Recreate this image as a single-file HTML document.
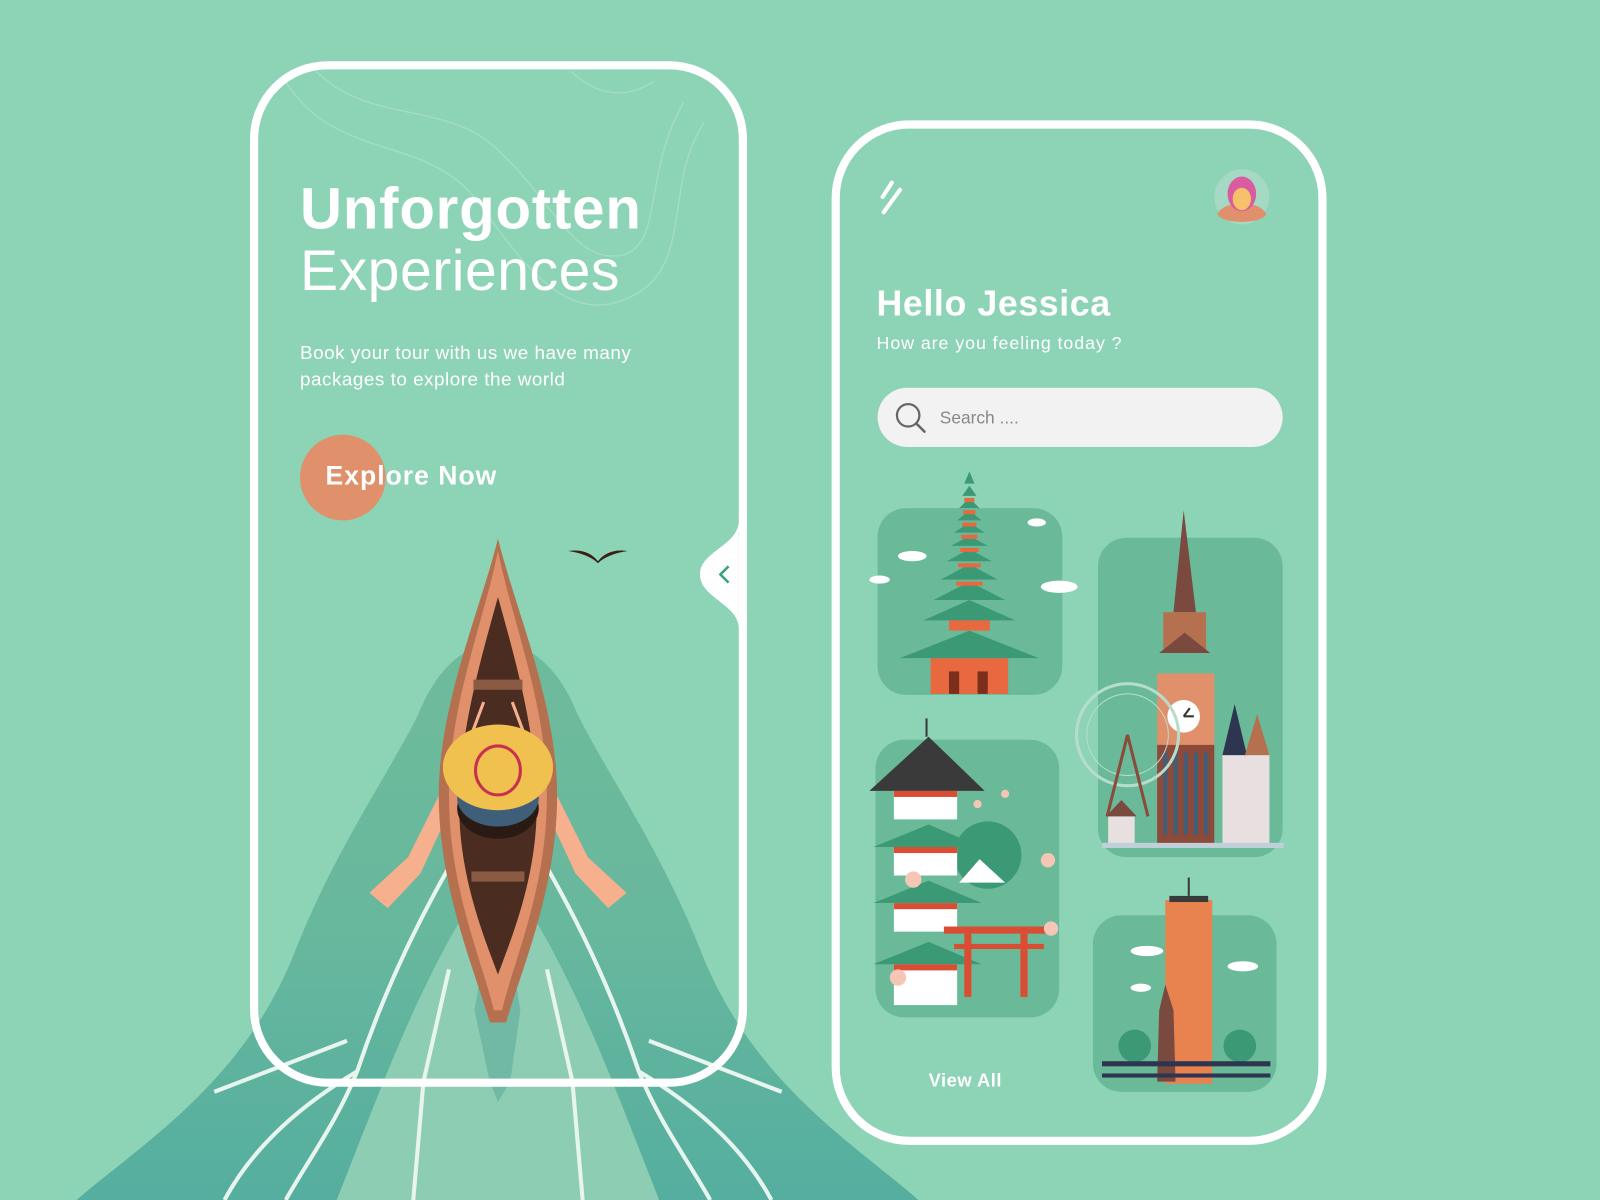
<!DOCTYPE html>
<html><head><meta charset="utf-8"><style>
html,body{margin:0;padding:0;background:#8dd3b6;width:1600px;height:1200px;overflow:hidden}
svg{display:block}
text{font-family:"Liberation Sans",sans-serif}
</style></head><body>
<svg width="1600" height="1200" viewBox="0 0 1568 1176" xmlns="http://www.w3.org/2000/svg">
<defs>
<linearGradient id="mt" x1="0" y1="0" x2="0" y2="1"><stop offset="0" stop-color="#6fbb9c"/><stop offset="0.5" stop-color="#68b89d"/><stop offset="1" stop-color="#55ae9f"/></linearGradient>
</defs>
<rect width="1568" height="1176" fill="#8dd3b6"/>
<g fill="none" stroke="#a7dfc7" stroke-width="1.5" opacity="0.8">
<path d="M280 80 C330 160 420 130 470 200 C520 270 560 320 620 290 C680 260 650 180 690 120"/>
<path d="M310 70 C360 120 430 100 480 140 C540 190 560 260 610 250 C650 240 630 170 670 100"/>
<path d="M560 70 C580 90 610 100 640 80"/>
</g>
<path d="M75 1176 C140 1120 240 1060 290 930 C330 830 380 760 410 700 C430 650 460 630 488 630 C516 630 546 650 566 700 C596 760 646 830 686 930 C736 1060 836 1120 900 1176 Z" fill="url(#mt)"/>
<path d="M330 1176 C360 1100 390 1020 420 960 C440 920 460 880 488 860 C516 880 536 920 556 960 C586 1020 616 1100 646 1176 Z" fill="#8dcdb3"/>
<path d="M470 860 L475 930 L465 990 L480 1060 L488 1080 L500 1060 L510 990 L500 930 L506 860Z" fill="#72b9a5"/>
<g fill="none" stroke="#e8f5ef" stroke-width="4">
<path d="M440 850 C400 920 370 990 350 1050 C330 1100 300 1140 280 1176"/>
<path d="M536 850 C576 920 606 990 626 1050 C646 1100 676 1140 696 1176"/>
<path d="M440 950 L415 1060 L405 1176"/><path d="M536 950 L561 1060 L571 1176"/>
<path d="M350 1050 C300 1080 250 1120 220 1176"/><path d="M626 1050 C676 1080 726 1120 756 1176"/>
<path d="M340 1020 L210 1070"/><path d="M636 1020 L766 1070"/>
</g>
<rect x="249" y="64" width="479" height="997" rx="72" fill="none" stroke="#fff" stroke-width="8"/>
<path d="M724 510 C724 535 686 540 686 563 C686 586 724 592 724 616 Z" fill="#fff"/>
<path d="M714 555 L706 563 L714 571" fill="none" stroke="#3aa07e" stroke-width="2.5"/>
<text x="294" y="224" font-size="57" font-weight="bold" fill="#fff" letter-spacing="0.8">Unforgotten</text>
<text x="294" y="284" font-size="56" font-weight="300" fill="#fff" letter-spacing="0.5">Experiences</text>
<text x="294" y="352" font-size="18.5" fill="#fff" letter-spacing="0.5">Book your tour with us we have many</text>
<text x="294" y="378" font-size="18.5" fill="#fff" letter-spacing="0.5">packages to explore the world</text>
<circle cx="336" cy="468" r="42" fill="#e0906a"/>
<text x="319" y="475" font-size="26" font-weight="bold" fill="#fff" letter-spacing="1">Explore Now</text>
<path d="M557 540 C570 538 580 542 586 550 C592 542 602 538 615 540 C602 542 592 546 586 552 C580 546 570 542 557 540Z" fill="#3a1f16"/>
<!-- oars -->
<path d="M440 760 L400 840 L362 875 L380 890 L412 856 L452 770Z" fill="#f7b08e"/>
<path d="M536 760 L576 840 L614 875 L596 890 L564 856 L524 770Z" fill="#f7b08e"/>
<!-- boat -->
<path d="M488 528 C470 600 430 690 430 780 C430 870 465 950 480 1002 L496 1002 C511 950 546 870 546 780 C546 690 506 600 488 528Z" fill="#b5704f"/>
<path d="M488 540 C474 610 440 690 440 780 C440 870 472 940 484 990 L492 990 C504 940 536 870 536 780 C536 690 502 610 488 540Z" fill="#e0906a"/>
<path d="M488 585 C470 650 450 720 450 790 C450 860 475 920 488 955 C501 920 526 860 526 790 C526 720 506 650 488 585Z" fill="#4a2c20"/>
<rect x="464" y="666" width="48" height="10" fill="#8b5a43"/>
<rect x="462" y="854" width="52" height="10" fill="#8b5a43"/>
<path d="M474 688 L462 720 M502 688 L514 720" stroke="#f7b08e" stroke-width="3"/>
<ellipse cx="488" cy="792" rx="40" ry="30" fill="#2a1a14"/>
<ellipse cx="488" cy="782" rx="40" ry="28" fill="#3f5e7a"/>
<ellipse cx="488" cy="752" rx="54" ry="42" fill="#f1c150"/>
<ellipse cx="488" cy="755" rx="22" ry="24" fill="none" stroke="#c8304f" stroke-width="3"/>
<!-- right phone -->
<rect x="819" y="122" width="477" height="996" rx="72" fill="none" stroke="#fff" stroke-width="8"/>
<g stroke="#fff" stroke-width="4" stroke-linecap="round"><path d="M874 179 L865 193"/><path d="M882 186 L866 208"/></g>
<circle cx="1217" cy="193" r="27" fill="#a6d9c3"/>
<path d="M1193 210 C1198 196 1236 196 1241 210 C1236 220 1198 220 1193 210Z" fill="#e0906a"/>
<ellipse cx="1217" cy="190" rx="14" ry="17" fill="#d95ba0"/>
<ellipse cx="1217" cy="195" rx="9" ry="11" fill="#f6c16a"/>
<text x="859" y="309" font-size="35" font-weight="bold" fill="#fff" letter-spacing="0.6">Hello Jessica</text>
<text x="859" y="342" font-size="17.5" fill="#fff" letter-spacing="0.9">How are you feeling today ?</text>
<rect x="860" y="380" width="397" height="58" rx="29" fill="#f2f2f2"/>
<circle cx="890" cy="407" r="11" fill="none" stroke="#666" stroke-width="2.2"/>
<path d="M898 415 L906 423" stroke="#666" stroke-width="2.5" stroke-linecap="round"/>
<text x="921" y="415" font-size="17" fill="#888">Search ....</text>
<rect x="860" y="498" width="181" height="183" rx="28" fill="#6aba9a"/>
<rect x="1076" y="527" width="181" height="313" rx="28" fill="#6aba9a"/>
<rect x="858" y="725" width="180" height="272" rx="28" fill="#6aba9a"/>
<rect x="1071" y="897" width="180" height="173" rx="28" fill="#6aba9a"/>
<g>
<rect x="912" y="645" width="76" height="35" fill="#e8693f"/>
<rect x="930" y="658" width="10" height="22" fill="#7a2e1b"/><rect x="958" y="658" width="10" height="22" fill="#7a2e1b"/>
<path d="M882 645 L950 618 L1018 645Z" fill="#3b9a75"/>
<path d="M905 608 L950 588 L995 608Z" fill="#3b9a75"/>
<rect x="930" y="608" width="40" height="10" fill="#e8693f"/>
<path d="M915 588 L950 570 L985 588Z" fill="#3b9a75"/>
<path d="M922 568 L950 553 L978 568Z" fill="#3b9a75"/>
<path d="M928 550 L950 538 L972 550Z" fill="#3b9a75"/>
<path d="M932 535 L950 525 L968 535Z" fill="#3b9a75"/>
<path d="M935 522 L950 512 L965 522Z" fill="#3b9a75"/>
<path d="M938 510 L950 500 L962 510Z" fill="#3b9a75"/>
<path d="M940 498 L950 488 L960 498Z" fill="#3b9a75"/>
<path d="M943 486 L950 476 L957 486Z" fill="#3b9a75"/>
<path d="M945 474 L950 462 L955 474Z" fill="#3b9a75"/>
<g fill="#e8693f"><rect x="937" y="570" width="26" height="4"/><rect x="939" y="552" width="22" height="4"/><rect x="941" y="537" width="18" height="4"/><rect x="942" y="524" width="16" height="4"/><rect x="943" y="512" width="14" height="4"/><rect x="944" y="500" width="12" height="4"/><rect x="945" y="488" width="10" height="4"/></g>
<g fill="#fff"><ellipse cx="894" cy="545" rx="14" ry="5"/><ellipse cx="1038" cy="575" rx="18" ry="6"/><ellipse cx="862" cy="568" rx="10" ry="4"/><ellipse cx="1016" cy="512" rx="9" ry="4"/></g>
</g>
<g>
<path d="M1160 500 L1150 600 L1172 600Z" fill="#7a4a3e"/>
<rect x="1140" y="600" width="42" height="40" fill="#b5704f"/>
<path d="M1136 640 L1161 620 L1186 640Z" fill="#7a4a3e"/>
<rect x="1134" y="660" width="56" height="170" fill="#e0906a"/>
<rect x="1134" y="730" width="56" height="100" fill="#8b4a3a"/>
<g fill="#3f5e7a"><rect x="1140" y="738" width="4" height="80"/><rect x="1150" y="738" width="4" height="80"/><rect x="1160" y="738" width="4" height="80"/><rect x="1170" y="738" width="4" height="80"/><rect x="1180" y="738" width="4" height="80"/></g>
<circle cx="1160" cy="702" r="16" fill="#fff"/>
<path d="M1160 702 L1166 694 M1160 702 L1170 702" stroke="#333" stroke-width="2"/>
<circle cx="1105" cy="720" r="50" fill="none" stroke="#b6ddcc" stroke-width="3"/>
<circle cx="1105" cy="720" r="40" fill="none" stroke="#b6ddcc" stroke-width="1"/>
<path d="M1105 720 L1085 800 M1105 720 L1125 800" stroke="#8b4a3a" stroke-width="3"/>
<rect x="1198" y="740" width="46" height="90" fill="#e8e0e0"/>
<path d="M1198 740 L1210 690 L1222 740Z" fill="#2d3550"/>
<path d="M1220 740 L1232 700 L1244 740Z" fill="#b5704f"/>
<rect x="1086" y="800" width="26" height="30" fill="#e8e0e0"/>
<path d="M1084 800 L1099 784 L1114 800Z" fill="#7a4a3e"/>
<rect x="1080" y="826" width="178" height="5" fill="#bfd0d8"/>
</g>
<g>
<circle cx="968" cy="838" r="33" fill="#3b9a75"/>
<path d="M940 865 L960 842 L985 865Z" fill="#fff"/>
<g fill="#fff"><rect x="876" y="775" width="62" height="28"/><rect x="876" y="830" width="62" height="28"/><rect x="876" y="885" width="62" height="28"/><rect x="876" y="945" width="62" height="40"/></g>
<g fill="#d94e32"><rect x="876" y="775" width="62" height="6"/><rect x="876" y="830" width="62" height="6"/><rect x="876" y="885" width="62" height="6"/><rect x="876" y="945" width="62" height="6"/></g>
<path d="M852 775 L910 722 L965 775Z" fill="#3a3a3a"/>
<path d="M908 722 L908 704" stroke="#3a3a3a" stroke-width="2"/>
<path d="M856 830 L910 808 L962 830Z" fill="#3b9a75"/>
<path d="M856 885 L910 863 L962 885Z" fill="#3b9a75"/>
<path d="M856 945 L910 923 L962 945Z" fill="#3b9a75"/>
<rect x="925" y="908" width="105" height="7" fill="#d94e32"/>
<rect x="935" y="925" width="88" height="5" fill="#d94e32"/>
<rect x="945" y="915" width="7" height="62" fill="#d94e32"/><rect x="1000" y="915" width="7" height="62" fill="#d94e32"/>
<g fill="#f5c6b5"><circle cx="1027" cy="843" r="7"/><circle cx="1030" cy="910" r="7"/><circle cx="895" cy="862" r="8"/><circle cx="880" cy="958" r="8"/><circle cx="958" cy="788" r="4"/><circle cx="985" cy="778" r="4"/></g>
</g>
<g>
<rect x="1142" y="882" width="46" height="180" fill="#e8834f"/>
<rect x="1146" y="878" width="38" height="6" fill="#3a3a3a"/>
<path d="M1165 878 L1165 860" stroke="#3a3a3a" stroke-width="2"/>
<path d="M1134 1060 L1136 990 L1142 965 L1150 990 L1152 1060Z" fill="#7a4a3e"/>
<circle cx="1112" cy="1025" r="16" fill="#3b9a75"/><circle cx="1215" cy="1025" r="16" fill="#3b9a75"/>
<rect x="1080" y="1040" width="165" height="5" fill="#2d3550"/>
<rect x="1080" y="1052" width="165" height="4" fill="#2d3550"/>
<g fill="#fff"><ellipse cx="1124" cy="932" rx="16" ry="5"/><ellipse cx="1218" cy="947" rx="15" ry="5"/><ellipse cx="1118" cy="968" rx="10" ry="4"/></g>
</g>
<text x="910" y="1065" font-size="18" font-weight="bold" fill="#fff" letter-spacing="0.5">View All</text>
</svg>
</body></html>
